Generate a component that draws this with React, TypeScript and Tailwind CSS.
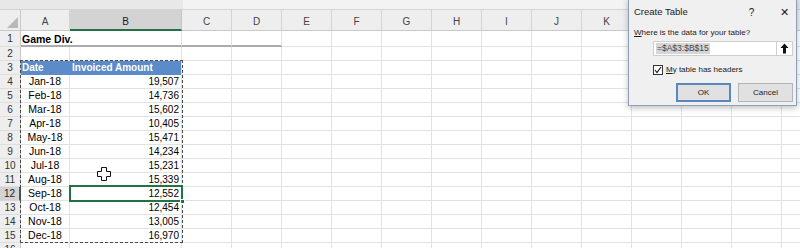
import React from "react";

const data: [string, string][] = [
    ["Jan-18", "19,507"],
    ["Feb-18", "14,736"],
    ["Mar-18", "15,602"],
    ["Apr-18", "10,405"],
    ["May-18", "15,471"],
    ["Jun-18", "14,234"],
    ["Jul-18", "15,231"],
    ["Aug-18", "15,339"],
    ["Sep-18", "12,552"],
    ["Oct-18", "12,454"],
    ["Nov-18", "13,005"],
    ["Dec-18", "16,970"],
];

const extraCols = ["C", "D", "E", "F", "G", "H", "I", "J", "K", "L", "M", "N", "O"];

function RowHead({ n, active }: { n: number; active?: boolean }) {
    return (
        <div
            className={
                active
                    ? "w-[21px] shrink-0 flex items-center justify-center bg-[#d3d3d3] border-r-2 border-r-[#217346] border-b border-b-[#d6d6d6] text-[10px] leading-none text-[#222]"
                    : "w-[21px] shrink-0 flex items-center justify-center bg-[#eeeeee] border-r border-r-[#c8c8c8] border-b border-b-[#dedede] text-[10px] leading-none text-[#333]"
            }
        >
            {n}
        </div>
    );
}

function EmptyCells({ underline }: { underline?: boolean }) {
    return (
        <>
            {extraCols.map((c, i) => (
                <div
                    key={c}
                    className={
                        underline && i < 2
                            ? "w-[50px] shrink-0 border-r border-r-[#e2e2e2] border-b-2 border-b-[#ababab]"
                            : "w-[50px] shrink-0 border-r border-r-[#e2e2e2] border-b border-b-[#e2e2e2]"
                    }
                />
            ))}
        </>
    );
}

function DataRow({ n, date, amount }: { n: number; date: string; amount: string }) {
    return (
        <div className="flex h-[14px]">
            <RowHead n={n} active={n === 12} />
            <div className="w-[49px] shrink-0 flex items-center justify-center border-r border-r-[#e2e2e2] border-b border-b-[#e2e2e2] text-[10.5px] leading-none">
                {date}
            </div>
            <div className="w-[112px] shrink-0 flex items-center justify-end pr-[2px] border-r border-r-[#e2e2e2] border-b border-b-[#e2e2e2] text-[10px] leading-none">
                {amount}
            </div>
            <EmptyCells />
        </div>
    );
}

function CreateTableDialog() {
    return (
        <div className="absolute left-[628px] top-[-3px] w-[169px] h-[109px] bg-[#f0f0f0] border border-[#8e9fbb] shadow-[0_2px_6px_rgba(0,0,0,0.25)] text-[8px] text-[#1a1a1a]">
            <div className="flex items-center h-[28px] pl-[5px]">
                <span className="text-[9.5px]">Create Table</span>
                <span className="ml-[61px] text-[10px]">?</span>
                <span className="ml-[26px] text-[11px]">✕</span>
            </div>
            <div className="pl-[5px] mt-[1px] h-[12px] leading-[12px]">
                <span className="underline">W</span>here is the data for your table?
            </div>
            <div className="flex ml-[24px] mt-[2px] h-[15px]">
                <div className="w-[124px] bg-white border border-[#cfcfcf] flex items-center pl-[2px]">
                    <span className="bg-[#d6d6d6] text-[#444] px-[1px] text-[8.5px] leading-[11px]">=$A$3:$B$15</span>
                </div>
                <div className="w-[16px] bg-white border border-l-0 border-[#cfcfcf] flex items-center justify-center">
                    <svg width="9" height="11" viewBox="0 0 9 11">
                        <path d="M4.5 0.5 L8.5 5 H6 V10.5 H3 V5 H0.5 Z" fill="#111" />
                    </svg>
                </div>
            </div>
            <div className="flex items-center ml-[24px] mt-[8px] h-[11px]">
                <div className="w-[10px] h-[10px] bg-white border border-[#333] flex items-center justify-center">
                    <svg width="8" height="8" viewBox="0 0 8 8">
                        <path d="M1 4 L3 6.5 L7 1" stroke="#111" strokeWidth="1.1" fill="none" />
                    </svg>
                </div>
                <span className="ml-[3px]">
                    <span className="underline">M</span>y table has headers
                </span>
            </div>
            <div className="flex ml-[47px] mt-[8px] gap-[7px]">
                <div className="w-[55px] h-[19px] bg-[#e1e1e1] border-2 border-[#5a87c0] flex items-center justify-center">
                    OK
                </div>
                <div className="w-[55px] h-[19px] bg-[#e1e1e1] border border-[#b4b4b4] flex items-center justify-center">
                    Cancel
                </div>
            </div>
        </div>
    );
}

export default function App() {
    return (
        <div className="relative w-[800px] h-[248px] overflow-hidden bg-white text-black font-['Liberation_Sans',Arial,sans-serif]">
            {/* formula bar strip */}
            <div className="flex h-[10px] border-b border-b-[#d4d4d4]">
                <div className="w-[183px] bg-[#e8e8e8]" />
                <div className="w-[445px] bg-[#f3f3f3]" />
                <div className="flex-1 bg-[#e8e8e8]" />
            </div>

            {/* column headers */}
            <div className="flex h-[21px] bg-[#eeeeee] text-[10px] leading-none text-[#444]">
                <div className="w-[21px] shrink-0 border-r border-r-[#c8c8c8] border-b border-b-[#c8c8c8] flex items-end justify-end pr-[2px] pb-[2px]">
                    <svg width="11" height="11" viewBox="0 0 11 11">
                        <path d="M11 0 L11 11 L0 11 Z" fill="#b9b9b9" />
                    </svg>
                </div>
                <div className="w-[49px] shrink-0 border-r border-r-[#d4d4d4] border-b border-b-[#c8c8c8] flex items-end justify-center pb-[3px]">
                    A
                </div>
                <div className="w-[112px] shrink-0 bg-[#d3d3d3] border-r border-r-[#c4c4c4] border-b-2 border-b-[#217346] flex items-end justify-center pb-[2px] text-[#222]">
                    B
                </div>
                {extraCols.map((c) => (
                    <div
                        key={c}
                        className="w-[50px] shrink-0 border-r border-r-[#d4d4d4] border-b border-b-[#c8c8c8] flex items-end justify-center pb-[3px]"
                    >
                        {c}
                    </div>
                ))}
            </div>

            {/* row 1 */}
            <div className="flex h-[16px]">
                <div className="w-[21px] shrink-0 flex items-end justify-center pb-[2px] bg-[#eeeeee] border-r border-r-[#c8c8c8] border-b border-b-[#dedede] text-[10px] leading-none text-[#333]">
                    1
                </div>
                <div className="w-[49px] shrink-0 flex items-end pb-[1px] pl-[1px] border-b-2 border-b-[#ababab] text-[10.5px] leading-none font-bold whitespace-nowrap">
                    Game Div.
                </div>
                <div className="w-[112px] shrink-0 border-r border-r-[#e2e2e2] border-b-2 border-b-[#ababab]" />
                <EmptyCells underline />
            </div>

            {/* row 2 */}
            <div className="flex h-[14px]">
                <RowHead n={2} />
                <div className="w-[49px] shrink-0 border-r border-r-[#e2e2e2] border-b border-b-[#e2e2e2]" />
                <div className="w-[112px] shrink-0 border-r border-r-[#e2e2e2] border-b border-b-[#e2e2e2]" />
                <EmptyCells />
            </div>

            {/* row 3: table header */}
            <div className="flex h-[14px]">
                <RowHead n={3} />
                <div className="w-[49px] shrink-0 flex items-center pl-[1px] bg-[#5b8bc9] text-white font-bold text-[10px] leading-none">
                    Date
                </div>
                <div className="w-[112px] shrink-0 flex items-center pl-[2px] bg-[#5b8bc9] border-r border-r-[#e2e2e2] text-white font-bold text-[10px] leading-none">
                    Invoiced Amount
                </div>
                <EmptyCells />
            </div>

            {data.map(([d, a], i) => (
                <DataRow key={d} n={i + 4} date={d} amount={a} />
            ))}

            {/* row 16 */}
            <div className="flex h-[14px]">
                <RowHead n={16} />
                <div className="w-[49px] shrink-0 border-r border-r-[#e2e2e2]" />
                <div className="w-[112px] shrink-0 border-r border-r-[#e2e2e2]" />
                <EmptyCells />
            </div>

            {/* copy range marching ants */}
            <div className="absolute left-[20px] top-[60px] w-[163px] h-[183px] border border-dashed border-[#4a4a4a] pointer-events-none" />

            {/* active cell B12 */}
            <div className="absolute left-[69px] top-[185px] w-[114px] h-[17px] border-2 border-[#217346] pointer-events-none">
                <div className="absolute right-[-4px] bottom-[-4px] w-[5px] h-[5px] bg-[#217346] border border-white" />
            </div>

            {/* cursor */}
            <svg className="absolute left-[97px] top-[167px]" width="14" height="14" viewBox="0 0 14 14">
                <path
                    d="M4.5 0.5 H9.5 V4.5 H13.5 V9.5 H9.5 V13.5 H4.5 V9.5 H0.5 V4.5 H4.5 Z"
                    fill="#fff"
                    stroke="#111"
                    strokeWidth="1"
                />
            </svg>

            <CreateTableDialog />
        </div>
    );
}
